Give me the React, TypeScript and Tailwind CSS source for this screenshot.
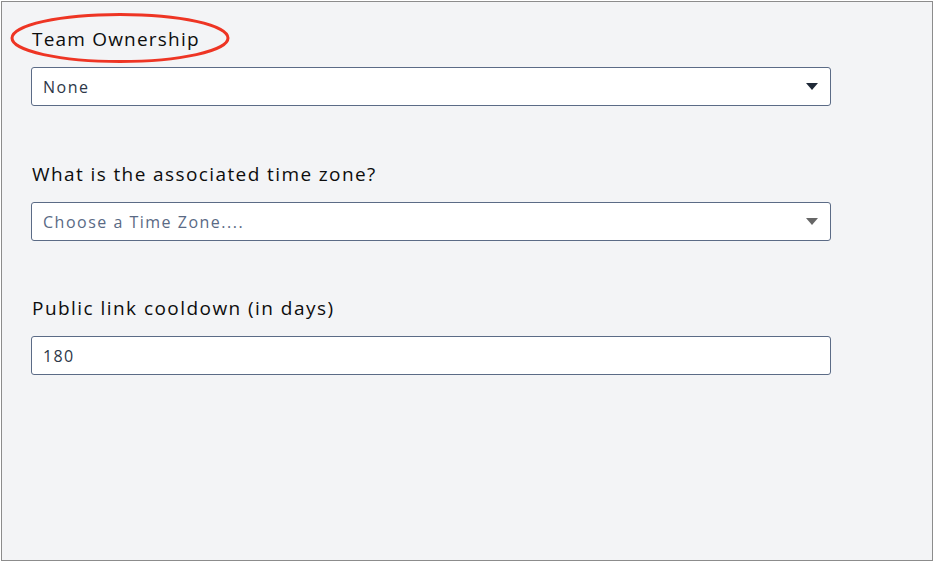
import React from 'react';

const Caret = ({ color }: { color: string }) => (
  <svg width="12" height="7" viewBox="0 0 12 7" className="shrink-0">
    <path d="M0 0 H12 L6 7 Z" fill={color} />
  </svg>
);

const App: React.FC = () => {
  return (
    <div className="w-[934px] h-[562px] bg-white" style={{ fontFamily: '"Open Sans", "Liberation Sans", sans-serif' }}>
      <div className="relative ml-px mt-px w-[932px] h-[560px] border border-[#8c8c8c] bg-[#f3f4f6] pl-[29px] pt-[20px]">
        {/* Team ownership */}
        <label className="block pl-px text-[19px] leading-[34px] tracking-[1.2px] font-medium text-[#0d0d0d]">Team Ownership</label>
        <div className="mt-[11px] flex h-[39px] w-[800px] items-center justify-between rounded-[3px] border border-[#5b6b86] bg-white pl-[11px] pr-[12px]">
          <span className="text-[16px] tracking-[1.5px] font-medium text-[#2d3748]">None</span>
          <Caret color="#1f2937" />
        </div>

        {/* Time zone */}
        <label className="mt-[51px] block pl-px text-[19px] leading-[34px] tracking-[1.4px] font-medium text-[#0d0d0d]">What is the associated time zone?</label>
        <div className="mt-[11px] flex h-[39px] w-[800px] items-center justify-between rounded-[3px] border border-[#5b6b86] bg-white pl-[11px] pr-[12px]">
          <span className="text-[16px] tracking-[1.5px] font-medium text-[#5a6a85]">Choose a Time Zone....</span>
          <Caret color="#666666" />
        </div>

        {/* Cooldown */}
        <label className="mt-[50px] block pl-px text-[19px] leading-[34px] tracking-[1.45px] font-medium text-[#0d0d0d]">Public link cooldown (in days)</label>
        <div className="mt-[11px] flex h-[39px] w-[800px] items-center rounded-[3px] border border-[#5b6b86] bg-white pl-[11px]">
          <span className="text-[16px] tracking-[1.3px] font-medium text-[#2d3748]">180</span>
        </div>

        {/* red annotation ellipse */}
        <svg className="absolute left-[8px] top-[10px]" width="222" height="52" viewBox="0 0 222 52">
          <ellipse cx="110" cy="26" rx="108" ry="23.5" fill="none" stroke="#ee3524" strokeWidth="3" />
        </svg>
      </div>
    </div>
  );
};

export default App;
